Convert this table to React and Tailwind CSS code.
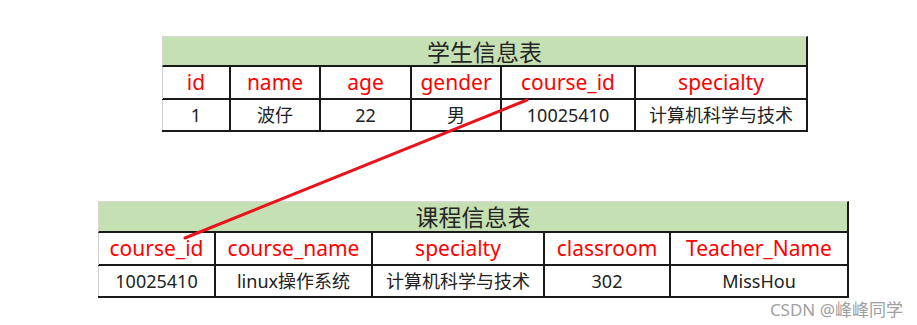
import React from 'react';

const students = {
  title: '学生信息表',
  cols: 'grid-cols-[69px_90px_91px_90px_134px_172px]',
  heads: ['id', 'name', 'age', 'gender', 'course_id', 'specialty'],
  row: ['1', '波仔', '22', '男', '10025410', '计算机科学与技术'],
};

const courses = {
  title: '课程信息表',
  cols: 'grid-cols-[118px_157px_172px_126px_178px]',
  heads: ['course_id', 'course_name', 'specialty', 'classroom', 'Teacher_Name'],
  row: ['10025410', 'linux操作系统', '计算机科学与技术', '302', 'MissHou'],
};

const InfoTable = ({ data, titleH, className }) => (
  <div className={`flex flex-col ${className}`}>
    {/* title bar */}
    <div
      className={`flex items-center justify-center pt-[2px] bg-[#c5e0b3] border-t border-t-[#d9d9d9] border-l border-l-[#d4d4d4] border-r-2 border-r-[#1a1a1a] border-b-2 border-b-[#1a1a1a] text-[23px] text-[#262626] ${titleH}`}
    >
      {data.title}
    </div>

    {/* column names */}
    <div className={`grid ${data.cols} h-[33px] border-b-2 border-[#1a1a1a]`}>
      {data.heads.map((h, i) => (
        <div
          key={h}
          className={`flex items-center justify-center text-[21px] text-[#ff0000] border-r-2 border-[#1a1a1a] ${i === 0 ? 'border-l border-l-[#cfcfcf]' : ''}`}
        >
          {h}
        </div>
      ))}
    </div>

    {/* data row */}
    <div className={`grid ${data.cols} h-[32px] border-b-2 border-[#1a1a1a]`}>
      {data.row.map((v, i) => (
        <div
          key={i}
          className={`flex items-center justify-center text-[18px] text-[#222] border-r-2 border-[#1a1a1a] ${i === 0 ? 'border-l border-l-[#cfcfcf]' : ''}`}
        >
          {v}
        </div>
      ))}
    </div>
  </div>
);

export default function App() {
  return (
    <div
      className="relative w-[917px] h-[325px] bg-white pt-[36px] overflow-hidden"
      style={{ fontFamily: '"Noto Sans", "Noto Sans CJK SC", sans-serif' }}
    >
      <InfoTable data={students} titleH="h-[31px]" className="ml-[162px] w-[646px]" />
      <InfoTable data={courses} titleH="h-[32px]" className="ml-[98px] w-[751px] mt-[69px]" />

      {/* foreign key link */}
      <svg className="absolute left-0 top-0 pointer-events-none" width="917" height="325">
        <line x1="527" y1="100" x2="185" y2="238" stroke="#e8141b" strokeWidth="3" strokeLinecap="round" />
      </svg>

      <div className="absolute right-[14px] bottom-[4px] text-[17px] leading-[22px] text-[#a0a0a0]">CSDN @峰峰同学</div>
    </div>
  );
}
